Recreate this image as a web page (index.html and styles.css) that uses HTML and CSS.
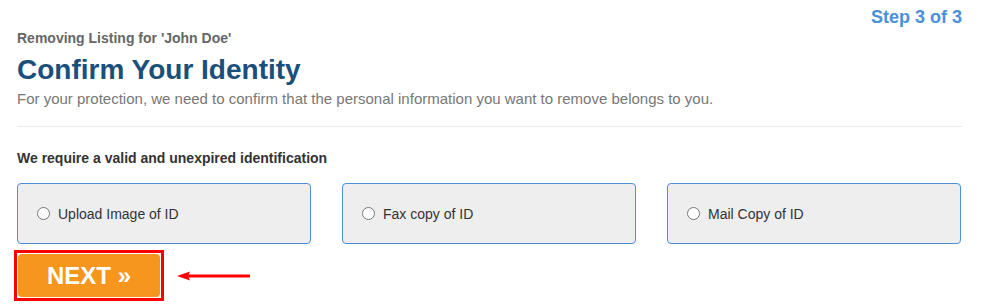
FILE: index.html
```html
<!DOCTYPE html>
<html>
<head>
<meta charset="utf-8">
<link rel="stylesheet" href="styles.css">
</head>
<body>
<div class="page">
  <div class="step-row"><span class="step">Step 3 of 3</span></div>
  <div class="removing">Removing Listing for 'John Doe'</div>
  <h1 class="title">Confirm Your Identity</h1>
  <p class="intro">For your protection, we need to confirm that the personal information you want to remove belongs to you.</p>
  <hr class="divider">
  <div class="require">We require a valid and unexpired identification</div>
  <div class="options">
    <label class="option"><span class="radio"></span><span>Upload Image of ID</span></label>
    <label class="option"><span class="radio"></span><span>Fax copy of ID</span></label>
    <label class="option"><span class="radio"></span><span>Mail Copy of ID</span></label>
  </div>
  <div class="next-row">
    <div class="highlight"><button class="next">NEXT »</button></div>
    <svg class="arrow" width="74" height="10" viewBox="0 0 74 10">
      <path d="M73 5 H10" stroke="#f00" stroke-width="3"/>
      <path d="M0 5 L13 0.5 L11 5 L13 9.5 Z" fill="#f00"/>
    </svg>
  </div>
</div>
</body>
</html>
```
FILE: styles.css
```css
* { box-sizing: border-box; }
body {
  margin: 0;
  background: #fff;
  font-family: "Liberation Sans", Arial, sans-serif;
}
.page {
  width: 962px;
  padding: 6px 0 0 17px;
}
.step-row {
  display: flex;
  justify-content: flex-end;
  height: 22px;
}
.step {
  font-size: 18px;
  line-height: 22px;
  font-weight: bold;
  color: #4a90d9;
}
.removing {
  margin-top: 2px;
  font-size: 14px;
  line-height: 16px;
  font-weight: bold;
  color: #666;
}
.title {
  margin: 8px 0 0;
  font-size: 28px;
  line-height: 32px;
  font-weight: bold;
  color: #1a4f7a;
}
.intro {
  margin: 4px 0 0;
  font-size: 15px;
  line-height: 18px;
  color: #777;
}
.divider {
  margin: 18px 0 0;
  border: 0;
  border-top: 1px solid #eaeaea;
  height: 0;
}
.require {
  margin-top: 23px;
  font-size: 14px;
  line-height: 16px;
  font-weight: bold;
  color: #333;
}
.options {
  margin-top: 17px;
  display: grid;
  grid-template-columns: repeat(3, 294px);
  column-gap: 31px;
}
.option {
  height: 61px;
  background: #eee;
  border: 1px solid #4a90d9;
  border-radius: 4px;
  display: flex;
  align-items: center;
  gap: 8px;
  padding-left: 19px;
  font-size: 14px;
  color: #333;
}
.radio {
  width: 13px;
  height: 13px;
  border: 1px solid #777;
  border-radius: 50%;
  background: #fff;
  flex: none;
}
.next-row {
  margin-top: 6px;
  display: flex;
  align-items: center;
  margin-left: -3px;
}
.highlight {
  border: 3px solid #f00;
  padding: 1px;
}
.next {
  width: 142px;
  height: 43px;
  border: 0;
  border-radius: 4px;
  background: #f7961e;
  color: #fff;
  font-family: "Liberation Sans", Arial, sans-serif;
  font-size: 24px;
  font-weight: bold;
  display: block;
  padding: 0;
}
.arrow {
  margin-left: 13px;
  display: block;
}
```
